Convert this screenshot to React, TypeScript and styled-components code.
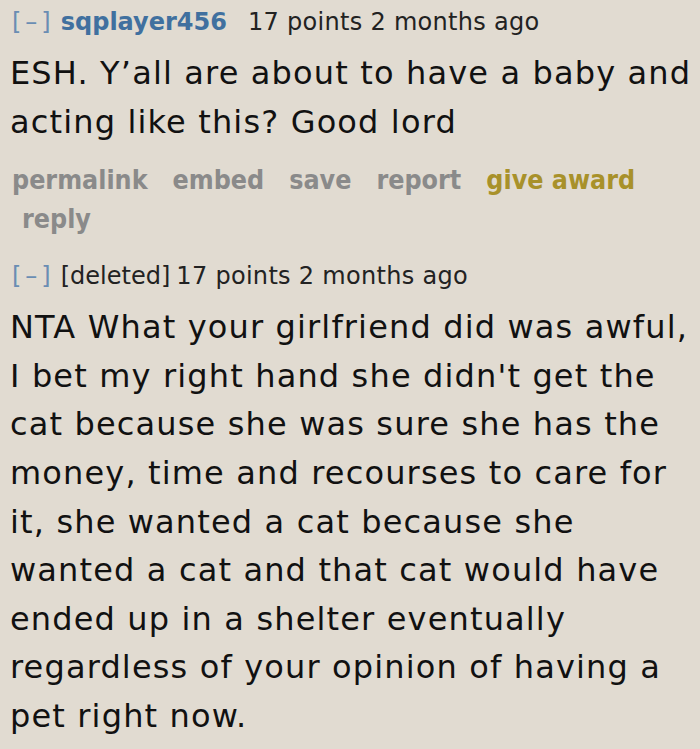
import React from 'react'
import styled, { createGlobalStyle } from 'styled-components'

const GlobalStyle = createGlobalStyle`
  html, body {
    margin: 0;
    padding: 0;
    background: #e1dbd1;
  }
  body {
    font-family: "DejaVu Sans", Verdana, sans-serif;
  }
`

const Page = styled.div`
  width: 700px;
  height: 749px;
  overflow: hidden;
  background: #e1dbd1;
  padding: 4px 0 0 10px;
  box-sizing: border-box;
`

const Comment = styled.div`
  display: flex;
  flex-direction: column;
`

const Tagline = styled.p`
  margin: 0;
  font-size: 24px;
  line-height: 36px;
  color: #222;
  white-space: nowrap;
  letter-spacing: 0.3px;
`

const Expand = styled.span`
  color: #6a8db3;
  letter-spacing: 4px;
  margin-left: 2px;
  margin-right: 6px;
`

const Author = styled.span<{ $deleted?: boolean }>`
  color: ${(p) => (p.$deleted ? '#222' : '#40709f')};
  font-weight: ${(p) => (p.$deleted ? 'normal' : 'bold')};
  letter-spacing: 0;
  margin-right: ${(p) => (p.$deleted ? '6px' : '21px')};
`

const Body = styled.div`
  margin: 9px 0 0;
  font-size: 32px;
  line-height: 48.6px;
  letter-spacing: 1.15px;
  color: #111;
`

const Line = styled.span`
  display: block;
  white-space: nowrap;
`

const Buttons = styled.ul`
  list-style: none;
  margin: 14px 0 0;
  padding: 0 0 0 2px;
  display: flex;
  flex-wrap: wrap;
  column-gap: 25px;
  row-gap: 0;
  font-family: "DejaVu Sans Condensed", "DejaVu Sans", sans-serif;
  font-size: 26.6px;
  line-height: 39px;
  font-weight: bold;
`

const Button = styled.li<{ $award?: boolean; $indent?: boolean }>`
  color: ${(p) => (p.$award ? '#a8912a' : '#8a8a8a')};
  padding-left: ${(p) => (p.$indent ? '10px' : '0')};
`

const Gap = styled.div`
  height: 20px;
`

const first = ['ESH. Y’all are about to have a baby and', 'acting like this? Good lord']

const second = [
  'NTA What your girlfriend did was awful,',
  "I bet my right hand she didn't get the",
  'cat because she was sure she has the',
  'money, time and recourses to care for',
  'it, she wanted a cat because she',
  'wanted a cat and that cat would have',
  'ended up in a shelter eventually',
  'regardless of your opinion of having a',
  'pet right now.',
]

export default function App() {
  return (
    <Page>
      <GlobalStyle />
      <Comment>
        <Tagline>
          <Expand>[–]</Expand>
          <Author>sqplayer456</Author>
          17 points 2 months ago
        </Tagline>
        <Body>
          {first.map((l) => (
            <Line key={l}>{l}</Line>
          ))}
        </Body>
        <Buttons>
          <Button>permalink</Button>
          <Button>embed</Button>
          <Button>save</Button>
          <Button>report</Button>
          <Button $award>give award</Button>
          <Button $indent>reply</Button>
        </Buttons>
      </Comment>
      <Gap />
      <Comment>
        <Tagline>
          <Expand>[–]</Expand>
          <Author $deleted>[deleted]</Author>
          17 points 2 months ago
        </Tagline>
        <Body>
          {second.map((l) => (
            <Line key={l}>{l}</Line>
          ))}
        </Body>
      </Comment>
    </Page>
  )
}
